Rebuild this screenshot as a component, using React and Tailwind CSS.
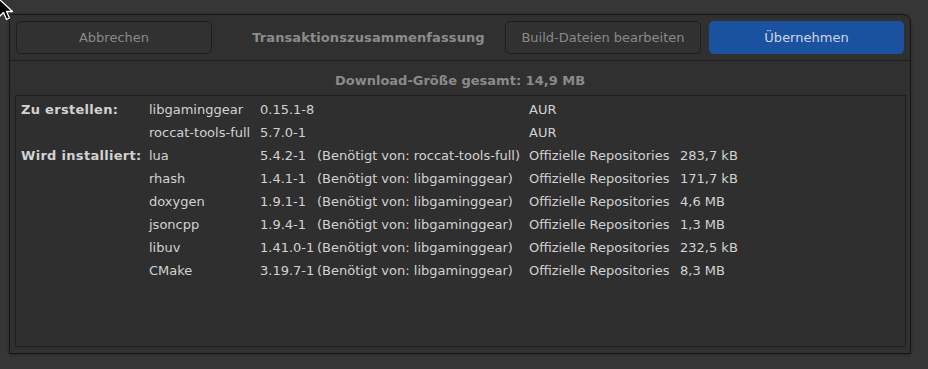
import React from "react";

const rows = [
  { label: "Zu erstellen:", name: "libgaminggear", ver: "0.15.1-8", dep: "", repo: "AUR", size: "" },
  { label: "", name: "roccat-tools-full", ver: "5.7.0-1", dep: "", repo: "AUR", size: "" },
  { label: "Wird installiert:", name: "lua", ver: "5.4.2-1", dep: "(Benötigt von: roccat-tools-full)", repo: "Offizielle Repositories", size: "283,7 kB" },
  { label: "", name: "rhash", ver: "1.4.1-1", dep: "(Benötigt von: libgaminggear)", repo: "Offizielle Repositories", size: "171,7 kB" },
  { label: "", name: "doxygen", ver: "1.9.1-1", dep: "(Benötigt von: libgaminggear)", repo: "Offizielle Repositories", size: "4,6 MB" },
  { label: "", name: "jsoncpp", ver: "1.9.4-1", dep: "(Benötigt von: libgaminggear)", repo: "Offizielle Repositories", size: "1,3 MB" },
  { label: "", name: "libuv", ver: "1.41.0-1", dep: "(Benötigt von: libgaminggear)", repo: "Offizielle Repositories", size: "232,5 kB" },
  { label: "", name: "CMake", ver: "3.19.7-1", dep: "(Benötigt von: libgaminggear)", repo: "Offizielle Repositories", size: "8,3 MB" },
];

export default function App() {
  return (
    <div
      className="relative w-[928px] h-[369px] bg-[#363636] overflow-hidden pl-[9px] pt-[14px] text-[13px]"
      style={{ fontFamily: '"DejaVu Sans", sans-serif' }}
    >
      <div className="w-[902px] h-[340px] bg-[#303030] border border-[#151515] rounded-tr-[8px] flex flex-col shadow-[0_1px_3px_rgba(0,0,0,0.3)]">
        {/* header bar */}
        <div className="flex items-center h-[46px] pl-[6px] pr-[6px] border-b border-[#1e1e1e] shrink-0 rounded-tr-[8px]">
          <div className="w-[196px] h-[33px] rounded-[5px] border border-[#1e1e1e] bg-[#313131] flex items-center justify-center text-[#8a8a8a]">
            Abbrechen
          </div>
          <div className="flex-1 text-center pl-[20px] font-bold tracking-[0.1px] text-[#8c8c8c]">
            Transaktionszusammenfassung
          </div>
          <div className="w-[196px] h-[33px] rounded-[5px] border border-[#1e1e1e] bg-[#313131] flex items-center justify-center text-[#8a8a8a]">
            Build-Dateien bearbeiten
          </div>
          <div className="ml-[8px] w-[195px] h-[33px] rounded-[5px] bg-[#1a52a0] flex items-center justify-center text-[#cdd6e6]">
            Übernehmen
          </div>
        </div>
        {/* download size */}
        <div className="h-[34px] pt-[5px] flex items-center justify-center font-bold text-[#8a8a8a] shrink-0">
          Download-Größe gesamt: 14,9 MB
        </div>
        {/* list */}
        <div className="ml-[5px] mr-[4px] h-[252px] border border-[#1f1f1f] bg-[#2f2f2f] pl-[5px] pt-[2px] text-[#d2d2d2]">
          {rows.map((r, i) => (
            <div key={i} className="grid grid-cols-[128px_111px_57px_212px_151px_auto] h-[23px] items-center whitespace-nowrap">
              <div className="font-bold tracking-[0.3px]">{r.label}</div>
              <div>{r.name}</div>
              <div>{r.ver}</div>
              <div>{r.dep}</div>
              <div>{r.repo}</div>
              <div>{r.size}</div>
            </div>
          ))}
        </div>
      </div>
      {/* mouse cursor */}
      <svg className="absolute left-[-3px] top-[-3px]" width="20" height="26" viewBox="0 0 20 26">
        <path d="M2 2 L2 20 L6.5 15.5 L9.5 22.5 L12.5 21 L9.5 14.5 L15.5 14.5 Z" fill="#000" stroke="#fff" strokeWidth="1.3" strokeLinejoin="round" />
      </svg>
    </div>
  );
}
